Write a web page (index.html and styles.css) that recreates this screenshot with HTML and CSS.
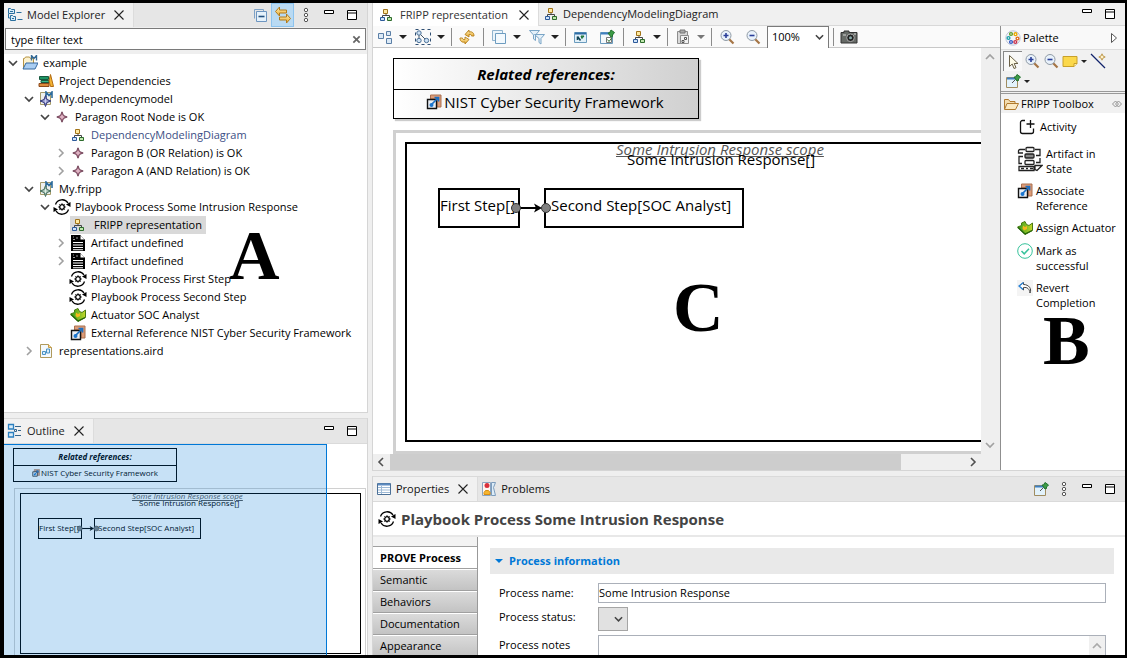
FILE: index.html
```html
<!DOCTYPE html>
<html lang="en">
<head>
<meta charset="utf-8">
<title>Model Explorer - FRIPP representation</title>
<link rel="stylesheet" href="styles.css">
</head>
<body>
<svg class="sprite" aria-hidden="true">
  <defs>
    <linearGradient id="gold" x1="0" y1="0" x2="0" y2="1"><stop offset="0" stop-color="#fff0b8"/><stop offset="1" stop-color="#e8a92f"/></linearGradient>
    <linearGradient id="leaf" x1="0" y1="0" x2="1" y2="0"><stop offset="0" stop-color="#2f9a1c"/><stop offset="1" stop-color="#c3d82a"/></linearGradient>
  </defs>
  <symbol id="i-explorer" viewBox="0 0 16 16"><g fill="#d9ecf8" stroke="#2a6f9e"><path d="M1.500 1.500h2l1 1h3v4h-6zM3.500 8.500h2l1 1h2v4h-5z"/><path d="M3 4.500h3M5 11.500h2M1.500 7v4h2M9.500 5.500h5M10.500 12.500h5"/></g></symbol>
  <symbol id="i-outline" viewBox="0 0 16 16"><g fill="#d9ecf8" stroke="#2a7fc0" stroke-width="1.300"><path d="M1.500 1.500h5v4.500h-5zM1.500 9.500h5v4.500h-5z"/></g><path d="M8 3.500h6M11 7.500h3M8 12.500h6" stroke="#35658c"/><path d="M7.500 6.500h2v2h-2z" fill="none" stroke="#35658c"/></symbol>
  <symbol id="i-close" viewBox="0 0 12 12"><path d="M1.500 1.500l9 9M10.500 1.500l-9 9" stroke="#222" stroke-width="1.100"/></symbol>
  <symbol id="i-min" viewBox="0 0 12 12"><path d="M1.500 1.500h9v3h-9z" fill="#fff" stroke="#000"/></symbol>
  <symbol id="i-max" viewBox="0 0 12 12"><path d="M1.500 1.500h9v9h-9zM1.500 4h9" fill="#fff" stroke="#000"/></symbol>
  <symbol id="i-dots" viewBox="0 0 8 16"><g fill="#fff" stroke="#555"><circle cx="4" cy="3" r="1.700"/><circle cx="4" cy="8" r="1.700"/><circle cx="4" cy="13" r="1.700"/></g></symbol>
  <symbol id="i-collapse" viewBox="0 0 16 16"><path d="M2.500 11.500v-9h9v2" fill="none" stroke="#7da2c8"/><path d="M4.500 4.500h10v10h-10z" fill="#e6f2fb" stroke="#6d95c0"/><path d="M6.500 9.500h6" stroke="#24507f" stroke-width="1.600"/></symbol>
  <symbol id="i-link" viewBox="0 0 18 18"><g fill="url(#gold)" stroke="#b27b1b"><path d="M1.500 5.500l4-4.500v3h7v3h-7v3z"/><path d="M16.500 12.500l-4-4.500v3h-7v3h7v3z"/></g></symbol>
  <symbol id="i-clear" viewBox="0 0 10 10"><path d="M1.500 1.500l7 7M8.500 1.500l-7 7" stroke="#666" stroke-width="1.900"/></symbol>
  <symbol id="i-open" viewBox="0 0 10 10"><path d="M1 3l4 4 4-4" fill="none" stroke="#444" stroke-width="1.700"/></symbol>
  <symbol id="i-shut" viewBox="0 0 10 10"><path d="M3 1l4 4-4 4" fill="none" stroke="#a0a0a0" stroke-width="1.600"/></symbol>
  <symbol id="i-project" viewBox="0 0 16 16"><path d="M1.500 13.500v-10h1l1-1.500h4l1 1.500h3v10z" fill="#fbf1cf" stroke="#b69343"/><path d="M1 14L4 8h12l-3 6z" fill="#a9cdf2" stroke="#34699f"/><path d="M9.500 5.500v-5l2.500 3 2.500-3v5" fill="none" stroke="#346a96" stroke-width="1.400"/></symbol>
  <symbol id="i-books" viewBox="0 0 16 16"><path d="M1.500 3.500h9v3h-9z" fill="#1d9463" stroke="#17583f"/><path d="M3 7.500h8v2h-8z" fill="#38b888" stroke="#17583f"/><path d="M1 10.500h10v3h-10z" fill="#dc8a3c" stroke="#8c4a1b"/><path d="M11 8l1.500-6.500 3 12h-3z" fill="#f3b332" stroke="#b26b12"/></symbol>
  <symbol id="i-model" viewBox="0 0 16 16"><path d="M2.500 1.500h10v12h-10z" fill="#eef0ee" stroke="#a59b6a"/><path d="M8 6V1l3 3.500L14 1v6" fill="none" stroke="#2d6c9c" stroke-width="1.600"/><path d="M7.500 4.500l1.500 4 4 1.500-4 1.500-1.500 4-1.500-4-4-1.500 4-1.500z" fill="#7d82bd" stroke="#343a7a"/><path d="M7.500 8v4M5.500 10h4" stroke="#cdd0f3"/></symbol>
  <symbol id="i-model2" viewBox="0 0 16 16"><path d="M2.500 1.500h10v12h-10z" fill="#eef0ee" stroke="#a59b6a"/><path d="M8 6V1l3 3.500L14 1v6" fill="none" stroke="#2d6c9c" stroke-width="1.600"/><path d="M7.500 4.500l1.500 4 4 1.500-4 1.500-1.500 4-1.500-4-4-1.500 4-1.500z" fill="#93b0a2" stroke="#47705f"/><path d="M7.500 8v4M5.500 10h4" stroke="#dff0e6"/></symbol>
  <symbol id="i-node" viewBox="0 0 16 16"><path d="M8 2.800l1.500 3.700L13.200 8 9.500 9.500 8 13.200 6.500 9.500 2.800 8l3.700-1.500z" fill="#b5788f" stroke="#704257"/><path d="M8 6v4M6 8h4" stroke="#ebc9d6"/></symbol>
  <symbol id="i-diagram" viewBox="0 0 16 16"><path d="M8 6v3M4.500 11V8.500h7V11" fill="none" stroke="#444"/><path d="M5.500 2.500h4v4h-4z" fill="#ffe9a0" stroke="#a2741a"/><path d="M2.500 10.500h4v3h-4z" fill="#cfe3fa" stroke="#2d5a9a"/><path d="M9.500 10.500h4v3h-4z" fill="#bfe6ad" stroke="#2d6b2c"/></symbol>
  <symbol id="i-process" viewBox="0 0 18 16"><g fill="none" stroke="#000" stroke-width="1.300"><path d="M2.500 5.500A7 7 0 0 1 15 4M15.500 10.500A7 7 0 0 1 3 12"/><circle cx="9" cy="8" r="2.300" stroke-width="1.300"/></g><path d="M9 4.300v1.200M9 10.500v1.200M5.300 8h1.200M11.500 8h1.200M6.400 5.400l.9.900M10.700 9.700l.9.900M11.600 5.400l-.9.900M6.400 10.600l.9-.9" stroke="#000"/><path d="M17.500 3v5l-4.500-2.500zM.5 13V8L5 10.500z"/></symbol>
  <symbol id="i-artifact" viewBox="0 0 16 18"><path d="M1 1h9l5 5v11H1z"/><path d="M10 1v5h5" fill="#fff" stroke="#000"/><path d="M3 8.500h10M3 11h10M3 13.500h10M3 15.700h10" stroke="#fff" stroke-width="1.100"/><path d="M3 3h1M6 4h2M3 5.500h2" stroke="#999"/></symbol>
  <symbol id="i-actuator" viewBox="0 0 16 16"><path d="M.5 7l4-1.500V3l3.500-1.500 1.500 3 2.500 1L15.500 3v7.500L8 14.500z" fill="url(#leaf)" stroke="#4b7a12"/><path d="M6 5.500l2 1.500 2-1v3l-3 1.500-1.500-2z" fill="#f7b81f"/><path d="M1 7.500l7 6.500 7-3.500" fill="none" stroke="#24640c" stroke-width="1.300"/></symbol>
  <symbol id="i-extref" viewBox="0 0 16 16"><path d="M4.500 1h10.500v12h-4V5H4.500z" fill="#dd9c78" stroke="#a97050"/><path d="M1.500 5.500h9v9h-9z" fill="#e9eef4" stroke="#111" stroke-width="1.400"/><path d="M5 11l7-7M8.500 3.500H12.500v4" fill="none" stroke="#1b6fc2" stroke-width="1.700"/><circle cx="5.500" cy="11" r="2" fill="#1b76cf"/></symbol>
  <symbol id="i-aird" viewBox="0 0 16 16"><path d="M2.500 1.500h8l3 3v10h-11z" fill="#f4f9fd" stroke="#b09a5c"/><path d="M10.500 1.500v3h3" fill="#f7dc9b" stroke="#c79b46"/><path d="M4.500 8.500h3v3h-3zM8.500 6h3v4h-3z" fill="#d9ecfa" stroke="#4b93c4"/></symbol>
  <symbol id="i-arrange" viewBox="0 0 16 16"><g fill="#dceaf7" stroke="#5b7fa6"><path d="M1.500 4.500h5v5h-5zM9.500 2.500h4v4h-4zM9.500 9.500h5v5h-5z"/></g></symbol>
  <symbol id="i-select" viewBox="0 0 18 18"><path d="M1.500 1.500h15v15h-15z" fill="none" stroke="#2f4f73" stroke-dasharray="3 3"/><path d="M5 5l8 8M5 5v8" stroke="#456"/><g fill="#cfe2f4" stroke="#4d7298"><circle cx="5" cy="5" r="2.200"/><circle cx="5" cy="12.500" r="2.200"/><circle cx="12.500" cy="12.500" r="2.200"/></g></symbol>
  <symbol id="i-refresh" viewBox="0 0 16 16"><g fill="url(#gold)" stroke="#b57e16" stroke-width=".9"><path d="M6 5.500L10 1v2c3-.8 5 .8 5 4h-2.500c0-1.400-1-1.900-2.500-1.500V8z"/><path d="M10 10.500L6 15v-2c-3 .8-5-.8-5-4h2.500c0 1.400 1 1.900 2.500 1.500V8z"/></g></symbol>
  <symbol id="i-layers" viewBox="0 0 16 16"><path d="M1.500 1.500h10v10h-10z" fill="#eaf4fb" stroke="#8fb3ce"/><path d="M4.500 4.500h10v10h-10z" fill="#f3f9fd" stroke="#6d9cc0"/></symbol>
  <symbol id="i-filter" viewBox="0 0 16 16"><g fill="#e4f0f9" stroke="#7aa5c6"><path d="M.5 1.500h10L6.500 6v5.500L4.500 10V6z"/><path d="M5.500 5.500h10L12 9.500V15l-2-1.500v-4z"/></g></symbol>
  <symbol id="i-pinview" viewBox="0 0 16 16"><path d="M1.500 3.500h12v10h-12z" fill="#e2f0f9" stroke="#6a9bbd"/><path d="M2 4.500h11" stroke="#2e6ca5" stroke-width="2"/><path d="M4.500 7.500l3 4M4.500 7.500v3.500" stroke="#145" stroke-width="1.600"/><path d="M8 7l3 0-2 2.500z" fill="#329a50" stroke="#1d6f35"/></symbol>
  <symbol id="i-pin" viewBox="0 0 16 16"><path d="M1.500 4.500h11v10h-11z" fill="#e2f2fb" stroke="#a08c60"/><path d="M2 5.500h10" stroke="#3e7fc0" stroke-width="2"/><path d="M7 10l3.500-3.500" stroke="#555"/><path d="M9 4h1.500L12 1.500 15.500 4 13.500 6v1.500L12 8z" fill="#3c9c46" stroke="#22702e"/></symbol>
  <symbol id="i-pincheck" viewBox="0 0 16 16"><path d="M1.500 3.500h12v11h-12z" fill="#f4f9fc" stroke="#6a9bbd"/><path d="M2 4.500h9" stroke="#3e7fc0" stroke-width="2"/><path d="M7.500 8.500h5v5h-5z" fill="#fff" stroke="#777"/><path d="M8.500 10.500l1.500 2 3-4" fill="none" stroke="#3a7a3a"/><path d="M9 4h1.500L12 1 15.500 3.500 13.500 6v1.500L12 8z" fill="#3c9c46" stroke="#22702e"/></symbol>
  <symbol id="i-paste" viewBox="0 0 16 16"><path d="M2.500 2.500h10v12h-10z" fill="#d9d9d9" stroke="#8d8d8d"/><path d="M5 1h5v3H5z" fill="#aaa" stroke="#777"/><path d="M5.500 6.500h8v8h-8z" fill="#f2f2f2" stroke="#8d8d8d"/><path d="M7 11.500h2v2H7zM9.500 8.500h2v2h-2z" fill="#fff" stroke="#555"/></symbol>
  <symbol id="i-zoomin" viewBox="0 0 16 16"><path d="M10 10l4.500 4.500" stroke="#a57546" stroke-width="2.200"/><circle cx="7" cy="6.500" r="5" fill="#e9f2fb" stroke="#8f9aa5"/><path d="M4.500 6.500h5M7 4v5" stroke="#2a3f99" stroke-width="1.600"/></symbol>
  <symbol id="i-zoomout" viewBox="0 0 16 16"><path d="M10 10l4.500 4.500" stroke="#a57546" stroke-width="2.200"/><circle cx="7" cy="6.500" r="5" fill="#e9f2fb" stroke="#8f9aa5"/><path d="M4.500 6.500h5" stroke="#2a3f99" stroke-width="1.600"/></symbol>
  <symbol id="i-camera" viewBox="0 0 18 16"><path d="M1 3.500h3V2h5v1.500h8V14H1z" fill="#666a66" stroke="#333"/><circle cx="10.500" cy="8.800" r="3.800" fill="#222" stroke="#aaa"/><circle cx="10.500" cy="8.800" r="1.500" fill="#8aa"/><path d="M3 6h3M14 5h2" stroke="#d4d4d4"/></symbol>
  <symbol id="i-palette" viewBox="0 0 16 16"><circle cx="8" cy="8" r="7.200" fill="#f2f4fb" stroke="#c0c6d8"/><g fill="#fff" stroke-width="1.400"><circle cx="6" cy="4" r="1.400" stroke="#5b9b28"/><circle cx="10.500" cy="4.200" r="1.400" stroke="#e8a800"/><circle cx="3.500" cy="8" r="1.400" stroke="#1aa0a8"/><circle cx="12.500" cy="8.500" r="1.400" stroke="#e26a1c"/><circle cx="6" cy="12" r="1.400" stroke="#3159c4"/><circle cx="10.300" cy="12" r="1.400" stroke="#c72f4a"/></g></symbol>
  <symbol id="i-cursor" viewBox="0 0 16 16"><path d="M4.500 1.500v11l2.700-2.500 1.800 4.500 2-.8-1.800-4.200h3.800z" fill="#fffce8" stroke="#6b6148"/></symbol>
  <symbol id="i-note" viewBox="0 0 16 16"><path d="M1 3.500h14v7L12 13.500H1z" fill="#fbd84b" stroke="#c8a02a"/><path d="M15 10.500h-3v3" fill="#fff3b5" stroke="#c8a02a"/></symbol>
  <symbol id="i-line" viewBox="0 0 16 16"><path d="M1 1l14 14" stroke="#10226b" stroke-width="1.300"/><path d="M12 .8l1 2.200 2.200 1-2.200 1-1 2.200-1-2.200-2.200-1 2.200-1z" fill="#fff3cd" stroke="#b38831" stroke-width=".8"/></symbol>
  <symbol id="i-folder" viewBox="0 0 16 16"><path d="M1.500 13V3.500h4l1.500 2h5V7" fill="#f4ddb0" stroke="#b07a2f"/><path d="M1.500 13.500L4 7.500h11.500l-3 6z" fill="#fbe9c3" stroke="#b07a2f"/></symbol>
  <symbol id="i-drawerpin" viewBox="0 0 12 10"><path d="M4.500 2L1.500 5l3 3M7.500 2l3 3-3 3M4.500 2l3 3-3 3M7.500 2l-3 3 3 3" fill="none" stroke="#888" stroke-width=".9"/></symbol>
  <symbol id="i-activity" viewBox="0 0 16 16"><path d="M6 1.500H3.500a2 2 0 0 0-2 2v9a2 2 0 0 0 2 2h9a2 2 0 0 0 2-2V9.500" fill="none" stroke="#111" stroke-width="1.300"/><path d="M7.500 5h8M11.500 1v8" stroke="#111" stroke-width="1.300"/></symbol>
  <symbol id="i-state" viewBox="0 0 26 26"><g fill="#fff" stroke="#222" stroke-width="1.300"><rect x="9" y="1.500" width="8" height="4" rx="1"/><rect x="8" y="8" width="9" height="4" rx="1" fill="#888"/><rect x="8" y="14.500" width="9" height="4" rx="1"/><path d="M8 3.500H3a1.500 1.500 0 0 0-1.500 1.500v2H6M18 3.500h5v6h-4M6 10.500H2v7h3M19 16.500h4V12"/><path d="M2 20.500h15v4H2zM18 23.500v-4h7l-5 5z"/></g><path d="M4 22.500h3M9 22.500h2M13 22.500h3" stroke="#222" stroke-width="1.600"/></symbol>
  <symbol id="i-check" viewBox="0 0 16 16"><circle cx="8" cy="8" r="7.300" fill="#fff" stroke="#36c29b"/><path d="M4.500 8l2.700 2.800 4.800-5" fill="none" stroke="#36c29b" stroke-width="1.500"/></symbol>
  <symbol id="i-undo" viewBox="0 0 16 16"><path d="M0 0h16v16H0z" fill="#f4f4f4"/><path d="M6.500 2.500L2 6l4.500 4V7.500c4-.5 6 1.500 6.500 5.500 2-4-1-8.500-6.500-8.500z" fill="#fff" stroke="#444"/><path d="M6.500 2.500L2 6l4 3.500" fill="none" stroke="#2e86d9" stroke-width="1.300"/></symbol>
  <symbol id="i-table" viewBox="0 0 16 16"><path d="M1.500 2.500h13v11h-13z" fill="#fff" stroke="#4b7097"/><path d="M2 3.500h12" stroke="#5d8bc0" stroke-width="2"/><path d="M2 6.500h12M2 9h12M2 11.500h12M5.500 5v8" stroke="#9db9d6"/></symbol>
  <symbol id="i-problems" viewBox="0 0 16 16"><path d="M1.500 1.500h8v13h-8z" fill="#fff5ee" stroke="#8aa4c0"/><path d="M10.500 1.500h4l-2 5 2 8h-4z" fill="#dcecf8" stroke="#7c9cbc"/><circle cx="6" cy="4.500" r="2.500" fill="#d9303b"/><path d="M3 13.500v-2l1.500-2h3l1.500 2v2z" fill="#f6b52e" stroke="#d98e12"/></symbol>
</svg>

<main class="workbench">
  <section class="side">
    <section class="panel explorer">
      <header class="tabbar">
        <div class="tab"><svg class="ic"><use href="#i-explorer"/></svg><span>Model Explorer</span><button class="x" aria-label="Close Model Explorer"><svg><use href="#i-close"/></svg></button></div>
        <div class="tools">
          <button aria-label="Collapse all"><svg class="ic"><use href="#i-collapse"/></svg></button>
          <button class="on" aria-label="Link with editor"><svg class="ic"><use href="#i-link"/></svg></button>
          <button aria-label="View menu"><svg class="dots"><use href="#i-dots"/></svg></button>
          <button aria-label="Minimize"><svg class="win"><use href="#i-min"/></svg></button>
          <button aria-label="Maximize"><svg class="win"><use href="#i-max"/></svg></button>
        </div>
      </header>
      <div class="filter"><input type="text" value="type filter text" aria-label="Filter"><button aria-label="Clear"><svg><use href="#i-clear"/></svg></button></div>
      <ul class="tree">
        <li class="l0"><svg class="tw"><use href="#i-open"/></svg><span class="item"><svg class="ic"><use href="#i-project"/></svg>example</span></li>
        <li class="l1"><i class="tw"></i><span class="item"><svg class="ic"><use href="#i-books"/></svg>Project Dependencies</span></li>
        <li class="l1"><svg class="tw"><use href="#i-open"/></svg><span class="item"><svg class="ic"><use href="#i-model"/></svg>My.dependencymodel</span></li>
        <li class="l2"><svg class="tw"><use href="#i-open"/></svg><span class="item"><svg class="ic"><use href="#i-node"/></svg>Paragon Root Node is OK</span></li>
        <li class="l3"><i class="tw"></i><span class="item blue"><svg class="ic"><use href="#i-diagram"/></svg>DependencyModelingDiagram</span></li>
        <li class="l3"><svg class="tw"><use href="#i-shut"/></svg><span class="item"><svg class="ic"><use href="#i-node"/></svg>Paragon B (OR Relation) is OK</span></li>
        <li class="l3"><svg class="tw"><use href="#i-shut"/></svg><span class="item"><svg class="ic"><use href="#i-node"/></svg>Paragon A (AND Relation) is OK</span></li>
        <li class="l1"><svg class="tw"><use href="#i-open"/></svg><span class="item"><svg class="ic"><use href="#i-model2"/></svg>My.fripp</span></li>
        <li class="l2"><svg class="tw"><use href="#i-open"/></svg><span class="item"><svg class="ic wide"><use href="#i-process"/></svg>Playbook Process Some Intrusion Response</span></li>
        <li class="l3"><i class="tw"></i><span class="item selected"><svg class="ic"><use href="#i-diagram"/></svg>FRIPP representation</span></li>
        <li class="l3"><svg class="tw"><use href="#i-shut"/></svg><span class="item"><svg class="ic tall"><use href="#i-artifact"/></svg>Artifact undefined</span></li>
        <li class="l3"><svg class="tw"><use href="#i-shut"/></svg><span class="item"><svg class="ic tall"><use href="#i-artifact"/></svg>Artifact undefined</span></li>
        <li class="l3"><i class="tw"></i><span class="item"><svg class="ic wide"><use href="#i-process"/></svg>Playbook Process First Step</span></li>
        <li class="l3"><i class="tw"></i><span class="item"><svg class="ic wide"><use href="#i-process"/></svg>Playbook Process Second Step</span></li>
        <li class="l3"><i class="tw"></i><span class="item"><svg class="ic"><use href="#i-actuator"/></svg>Actuator SOC Analyst</span></li>
        <li class="l3"><i class="tw"></i><span class="item"><svg class="ic"><use href="#i-extref"/></svg>External Reference NIST Cyber Security Framework</span></li>
        <li class="l1"><svg class="tw"><use href="#i-shut"/></svg><span class="item"><svg class="ic"><use href="#i-aird"/></svg>representations.aird</span></li>
      </ul>
      <strong class="mark mark-a">A</strong>
    </section>

    <section class="panel outline">
      <header class="tabbar">
        <div class="tab"><svg class="ic"><use href="#i-outline"/></svg><span>Outline</span><button class="x" aria-label="Close Outline"><svg><use href="#i-close"/></svg></button></div>
        <div class="tools">
          <button aria-label="Minimize"><svg class="win"><use href="#i-min"/></svg></button>
          <button aria-label="Maximize"><svg class="win"><use href="#i-max"/></svg></button>
        </div>
      </header>
      <div class="canvas mini">
        <div class="refs"><b>Related references:</b><span><svg><use href="#i-extref"/></svg>NIST Cyber Security Framework</span></div>
        <div class="scope"></div>
        <div class="process"></div>
        <em class="scope-name">Some Intrusion Response scope</em>
        <span class="process-name">Some Intrusion Response[]</span>
        <div class="step first">First Step[]</div>
        <div class="step second">Second Step[SOC Analyst]</div>
        <svg class="edge" viewBox="0 0 40 12"><path d="M8 6h20" stroke="#000" stroke-width="2"/><path d="M23 1.500L31 6l-8 4.500 2-4.500z"/><g fill="#808080" stroke="#333"><circle cx="5" cy="6" r="4.500"/><circle cx="35" cy="6" r="4.500"/></g></svg>
        <div class="viewport"></div>
      </div>
    </section>
  </section>

  <section class="content">
    <section class="panel editor">
      <header class="tabbar light">
        <div class="tab active"><svg class="ic"><use href="#i-diagram"/></svg><span>FRIPP representation</span><button class="x" aria-label="Close FRIPP representation"><svg><use href="#i-close"/></svg></button></div>
        <div class="tab rest"><svg class="ic"><use href="#i-diagram"/></svg><span>DependencyModelingDiagram</span></div>
        <div class="tools">
          <button aria-label="Minimize"><svg class="win"><use href="#i-min"/></svg></button>
          <button aria-label="Maximize"><svg class="win"><use href="#i-max"/></svg></button>
        </div>
      </header>
      <div class="editor-body">
        <div class="drawing">
          <div class="toolbar">
            <div class="pair"><button aria-label="Arrange"><svg class="ic"><use href="#i-arrange"/></svg></button><button class="drop" aria-label="Arrange options"></button></div>
            <div class="pair"><button aria-label="Select"><svg class="ic large"><use href="#i-select"/></svg></button><button class="drop" aria-label="Select options"></button></div>
            <i class="sep"></i>
            <button aria-label="Refresh"><svg class="ic"><use href="#i-refresh"/></svg></button>
            <i class="sep"></i>
            <div class="pair"><button aria-label="Layers"><svg class="ic"><use href="#i-layers"/></svg></button><button class="drop" aria-label="Layer options"></button></div>
            <div class="pair"><button aria-label="Filters"><svg class="ic"><use href="#i-filter"/></svg></button><button class="drop" aria-label="Filter options"></button></div>
            <i class="sep"></i>
            <button aria-label="Show elements"><svg class="ic"><use href="#i-pinview"/></svg></button>
            <button aria-label="Pin elements"><svg class="ic"><use href="#i-pincheck"/></svg></button>
            <i class="sep"></i>
            <div class="pair"><button aria-label="Mode"><svg class="ic"><use href="#i-diagram"/></svg></button><button class="drop" aria-label="Mode options"></button></div>
            <i class="sep"></i>
            <div class="pair"><button aria-label="Paste layout"><svg class="ic"><use href="#i-paste"/></svg></button><button class="drop dim" aria-label="Paste options"></button></div>
            <i class="sep"></i>
            <button aria-label="Zoom in"><svg class="ic"><use href="#i-zoomin"/></svg></button>
            <button aria-label="Zoom out"><svg class="ic"><use href="#i-zoomout"/></svg></button>
            <div class="zoom"><select aria-label="Zoom level"><option>100%</option></select><svg><use href="#i-open"/></svg></div>
            <i class="sep"></i>
            <button aria-label="Export as image"><svg class="ic wide"><use href="#i-camera"/></svg></button>
          </div>
          <div class="scroller">
            <div class="canvas main">
              <div class="refs"><b>Related references:</b><span><svg><use href="#i-extref"/></svg>NIST Cyber Security Framework</span></div>
              <div class="scope"></div>
              <div class="process"></div>
              <em class="scope-name">Some Intrusion Response scope</em>
              <span class="process-name">Some Intrusion Response[]</span>
              <div class="step first">First Step[]</div>
              <div class="step second">Second Step[SOC Analyst]</div>
              <svg class="edge" viewBox="0 0 40 12"><path d="M8 6h20" stroke="#000" stroke-width="2"/><path d="M23 1.500L31 6l-8 4.500 2-4.500z"/><g fill="#808080" stroke="#333"><circle cx="5" cy="6" r="4.500"/><circle cx="35" cy="6" r="4.500"/></g></svg>
              <strong class="mark mark-c">C</strong>
            </div>
            <div class="vbar"><svg class="up"><use href="#i-open"/></svg><svg><use href="#i-open"/></svg></div>
            <div class="hbar"><svg class="left"><use href="#i-shut"/></svg><span class="track"><i class="thumb"></i></span><svg><use href="#i-shut"/></svg></div>
          </div>
        </div>
        <aside class="palette">
          <h2><svg class="ic"><use href="#i-palette"/></svg><span>Palette</span><svg class="fly" viewBox="0 0 8 12"><path d="M1.500 1.500l5 4.500-5 4.500z" fill="#fff" stroke="#555"/></svg></h2>
          <div class="ptools">
            <button class="pressed" aria-label="Select"><svg class="ic"><use href="#i-cursor"/></svg></button>
            <button aria-label="Zoom in"><svg class="ic"><use href="#i-zoomin"/></svg></button>
            <button aria-label="Zoom out"><svg class="ic"><use href="#i-zoomout"/></svg></button>
            <button aria-label="Note"><svg class="ic"><use href="#i-note"/></svg></button>
            <button class="drop" aria-label="Note options"></button>
            <button aria-label="Note attachment"><svg class="ic"><use href="#i-line"/></svg></button>
            <button aria-label="Pin"><svg class="ic"><use href="#i-pin"/></svg></button>
            <button class="drop" aria-label="Pin options"></button>
          </div>
          <h3><svg class="ic"><use href="#i-folder"/></svg><span>FRIPP Toolbox</span><svg class="dp"><use href="#i-drawerpin"/></svg></h3>
          <div class="entries">
            <button class="activity"><svg class="ic"><use href="#i-activity"/></svg><span>Activity</span></button>
            <button><svg class="big"><use href="#i-state"/></svg><span>Artifact in<br>State</span></button>
            <button><svg class="ic"><use href="#i-extref"/></svg><span>Associate<br>Reference</span></button>
            <button><svg class="ic"><use href="#i-actuator"/></svg><span>Assign Actuator</span></button>
            <button><svg class="ic"><use href="#i-check"/></svg><span>Mark as<br>successful</span></button>
            <button><svg class="ic"><use href="#i-undo"/></svg><span>Revert<br>Completion</span></button>
          </div>
          <strong class="mark mark-b">B</strong>
        </aside>
      </div>
    </section>

    <section class="panel properties">
      <header class="tabbar">
        <div class="tab"><svg class="ic"><use href="#i-table"/></svg><span>Properties</span><button class="x" aria-label="Close Properties"><svg><use href="#i-close"/></svg></button></div>
        <div class="tab rest"><svg class="ic"><use href="#i-problems"/></svg><span>Problems</span></div>
        <div class="tools">
          <button aria-label="Pin"><svg class="ic"><use href="#i-pin"/></svg></button>
          <button aria-label="View menu"><svg class="dots"><use href="#i-dots"/></svg></button>
          <button aria-label="Minimize"><svg class="win"><use href="#i-min"/></svg></button>
          <button aria-label="Maximize"><svg class="win"><use href="#i-max"/></svg></button>
        </div>
      </header>
      <h1><svg class="ic wide"><use href="#i-process"/></svg><span>Playbook Process Some Intrusion Response</span></h1>
      <div class="sheet">
        <nav class="pages">
          <button class="current">PROVE Process</button>
          <button>Semantic</button>
          <button>Behaviors</button>
          <button>Documentation</button>
          <button>Appearance</button>
        </nav>
        <form class="form">
          <h2>Process information</h2>
          <div class="fields">
            <label for="pname">Process name:</label><input id="pname" type="text" value="Some Intrusion Response">
            <label for="pstatus">Process status:</label><div class="status"><select id="pstatus"><option></option></select><svg><use href="#i-open"/></svg></div>
            <label for="pnotes">Process notes</label><div class="notes"><textarea id="pnotes"></textarea><span><svg><use href="#i-open"/></svg></span></div>
          </div>
        </form>
      </div>
    </section>
  </section>
</main>
</body>
</html>
```

FILE: styles.css
```css
* { box-sizing: border-box; }
body { margin: 0; font: 11px/18px "Open Sans", "Noto Sans", sans-serif; color: #000; background: #000; }
h1, h2, h3, ul { margin: 0; padding: 0; font-size: inherit; }
button { margin: 0; padding: 0; border: 0; background: none; font: inherit; color: inherit; }
input, select, textarea { margin: 0; font: inherit; color: inherit; border-radius: 0; outline: 0; }
svg { display: block; flex: none; }
.sprite { position: absolute; width: 0; height: 0; }
.ic { width: 16px; height: 16px; }
.ic.wide { width: 18px; margin: 0 -1px; }
.ic.tall { height: 18px; }
.ic.large { width: 18px; height: 18px; }

.workbench { height: 100vh; border: solid #000; border-width: 3px 2px 3px 4px; display: grid; grid-template-columns: minmax(0, 364fr) minmax(0, 753fr); gap: 4px; background: #efefef; overflow: hidden; }
.side, .content { display: grid; min-height: 0; min-width: 0; gap: 5px; }
.side { grid-template-rows: minmax(0, 410fr) minmax(0, 237fr); }
.content { grid-template-rows: minmax(0, 468fr) minmax(0, 179fr); }
.panel { position: relative; display: flex; flex-direction: column; min-height: 0; min-width: 0; overflow: hidden; }
.side .panel { border-right: 1px solid #d5d5d5; }
.explorer { border-bottom: 1px solid #d5d5d5; }

.tabbar { display: flex; flex: none; height: 26px; background: #e6e6e6; }
.tab { display: flex; align-items: center; gap: 4px; padding: 0 8px 0 3px; background: #f1f1f1; border-right: 1px solid #dcdcdc; color: #222; white-space: nowrap; }
.tab.rest { background: none; border: 0; }
.outline .tabbar, .properties .tabbar { border: solid #dadada; border-width: 1px 0; }
.explorer .tabbar { height: 24px; }
.x { width: 12px; height: 12px; margin-left: 4px; }
.x svg, .win { width: 12px; height: 12px; }
.tools { margin-left: auto; display: flex; align-items: center; padding-right: 4px; }
.tools button { width: 23px; height: 100%; display: flex; align-items: center; justify-content: center; }
.tools .on { background: #b9daf3; border: 1px solid #8cc3ee; }
.tools .on .ic { width: 18px; height: 18px; }
.dots { width: 8px; height: 16px; }
.light.tabbar { background: #f0f0f0; height: 23px; border-bottom: 1px solid #d8d8d8; }
.light .active { background: #fff; height: 23px; color: #333; padding: 0 8px 0 5px; gap: 6px; }
.light .rest { padding-left: 4px; }

.filter { flex: none; height: 22px; margin: 1px 1px 4px; display: flex; align-items: center; border: 1px solid #7a7a7a; background: #fff; }
.filter input { flex: 1; min-width: 0; height: 20px; border: 0; padding: 0 5px; background: none; }
.filter button { width: 18px; height: 18px; }
.filter svg { width: 9px; height: 9px; margin: auto; }
.tree { flex: 1; min-height: 0; overflow: hidden; background: #fff; list-style: none; white-space: nowrap; }
.tree li { height: 18px; display: flex; align-items: center; }
.l1 { padding-left: 16px; }
.l2 { padding-left: 32px; }
.l3 { padding-left: 48px; }
.tree .tw { flex: none; width: 10px; height: 10px; margin: 0 4px; }
.item { display: flex; align-items: center; gap: 5px; height: 18px; }
.item.blue { color: #3c4f85; }
.item.selected { background: #d9d9d9; gap: 8px; padding: 0 4px 0 0; }

.mark { position: absolute; z-index: 2; font: bold 70px/50px "Liberation Serif", serif; }
.mark-a { left: 225px; top: 228px; }
.mark-b { left: 42px; top: 290px; }
.mark-c { left: 300px; top: 235px; }

.canvas { position: relative; flex: 1; min-height: 0; background: #fff; overflow: hidden; white-space: nowrap; }
.canvas > * { position: absolute; }
.refs { border: 1px solid #000; background: linear-gradient(90deg, #fff, #d0d0d0); display: grid; grid-template-rows: 1fr 1fr; text-align: center; }
.refs b { font-style: italic; border-bottom: 1px solid #000; }
.refs span { display: flex; justify-content: center; align-items: center; gap: 2px; }
.scope { border: solid #d0d0d0; }
.process { border: solid #000; }
.scope-name { color: #555; text-decoration: underline; }
.step { border: 2px solid #000; }

.main { font-size: 15px; line-height: 20px; }
.main .refs { left: 20px; top: 10px; width: 306px; height: 61px; line-height: 30px; box-shadow: 2px 2px 1px #ccc; }
.main .refs span { line-height: 20px; padding: 0 2px 4px 0; }
.main .refs svg { width: 16px; height: 16px; }
.main .scope { left: 20px; top: 82px; right: 0; height: 324px; border-width: 3px 0 3px 3px; }
.main .process { left: 32px; top: 94px; right: 0; height: 300px; border-width: 2px 0 2px 2px; }
.main .scope-name { left: 243px; top: 91px; }
.main .process-name { left: 254px; top: 101px; }
.main .step { height: 40px; line-height: 30px; top: 140px; }
.main .first { left: 65px; width: 82px; }
.main .second { left: 171px; width: 200px; padding-left: 5px; }
.main .edge { left: 138px; top: 154px; width: 40px; height: 12px; }

.mini { font-size: 8px; line-height: 10px; }
.mini .refs { left: 9px; top: 4px; width: 164px; height: 34px; line-height: 16px; background: #fff; }
.mini .refs span { gap: 1px; line-height: 10px; padding-bottom: 2px; }
.mini .refs svg { width: 8px; height: 8px; }
.mini .scope { left: 10px; top: 44px; right: 1px; height: 180px; border-width: 1px; }
.mini .process { left: 16px; top: 49px; right: 6px; height: 161px; border-width: 1px; }
.mini .scope-name { left: 128px; top: 47px; }
.mini .process-name { left: 135px; top: 54px; }
.mini .step { border-width: 1px; top: 74px; height: 21px; line-height: 17px; }
.mini .first { left: 34px; width: 44px; }
.mini .second { left: 90px; width: 107px; padding-left: 3px; }
.mini .edge { left: 73px; top: 81px; width: 22px; height: 7px; }
.viewport { left: 0; top: 0; bottom: 0; width: 89%; background: rgba(0, 120, 215, .22); border: solid #0078d7; border-width: 1px 1px 0 0; }

.editor { border: solid #d5d5d5; border-width: 0 0 1px 1px; }
.editor-body { flex: 1; min-height: 0; display: grid; grid-template-columns: minmax(0, 1fr) 125px; }
.drawing { display: flex; flex-direction: column; min-width: 0; min-height: 0; }
.toolbar { flex: none; height: 22px; display: flex; align-items: center; gap: 2px; background: #fafafa; border-bottom: 1px solid #c8c8c8; }
.toolbar button { width: 24px; height: 20px; display: flex; align-items: center; justify-content: center; }
.pair { display: flex; }
.toolbar .drop, .ptools .drop { width: 12px; display: flex; align-items: center; justify-content: center; }
.drop::before { content: ""; border: solid transparent; border-width: 4px 4px 0; border-top-color: #222; }
.drop.dim::before { border-top-color: #777; }
.sep { width: 4px; height: 18px; background: linear-gradient(#8c8c8c, #8c8c8c) center / 1px 100% no-repeat; }
.zoom { position: relative; width: 62px; height: 22px; }
.zoom select { width: 100%; height: 100%; appearance: none; border: 1px solid #7a7a7a; border-bottom: 0; background: #fff; padding: 0 4px; }
.zoom svg { position: absolute; right: 5px; top: 6px; width: 9px; height: 10px; }
.scroller { flex: 1; min-height: 0; display: grid; grid-template: minmax(0, 1fr) 16px / minmax(0, 1fr) 19px; background: #efefef; }
.vbar { display: flex; flex-direction: column; justify-content: space-between; align-items: center; padding: 4px 2px 4px 0; opacity: .45; }
.vbar svg, .hbar svg { width: 10px; height: 10px; }
.up { transform: rotate(180deg); }
.hbar { display: flex; align-items: center; padding: 0 3px; gap: 4px; color: #555; }
.hbar svg { filter: brightness(.5); }
.left { transform: rotate(180deg); }
.track { flex: 1; height: 100%; }
.thumb { display: block; width: 89%; height: 100%; background: #cdcdcd; }

.palette { position: relative; display: flex; flex-direction: column; min-height: 0; border-left: 1px solid #8f8f8f; background: #fff; overflow: hidden; }
.palette h2 { flex: none; height: 24px; display: flex; align-items: center; gap: 2px; padding: 0 7px 0 4px; background: #f9f9f9; font-weight: normal; border-bottom: 1px solid #ddd; }
.palette h2 span, .palette h3 span { flex: 1; white-space: nowrap; }
.fly { width: 8px; height: 12px; }
.ptools { flex: none; display: flex; flex-wrap: wrap; background: #f1f1f1; padding: 1px 2px 0; border-bottom: 3px double #999; }
.ptools button { width: 19px; height: 20px; display: flex; align-items: center; justify-content: center; }
.ptools .pressed { border: solid #888; border-width: 1px 0 0 1px; background: #f8f8f8; }
.ptools .drop { width: 9px; }
.ptools .drop::before { border-width: 3px 3px 0; }
.palette h3 { flex: none; height: 19px; display: flex; align-items: center; gap: 2px; padding: 0 2px; background: #f1f1f1; font-weight: normal; }
.dp { width: 12px; height: 10px; }
.entries { display: flex; flex-direction: column; gap: 7px; padding: 6px 2px 0 16px; line-height: 15px; }
.entries button { display: flex; align-items: flex-start; gap: 3px; text-align: left; white-space: nowrap; }
.entries .activity { gap: 5px; padding: 0 0 4px 2px; }
.entries .big { width: 26px; height: 26px; }

.properties { border-left: 1px solid #d5d5d5; background: #fff; }
.properties .tab { color: #111; }
.properties h1 { flex: none; height: 35px; display: flex; align-items: center; gap: 6px; padding: 0 6px; font-size: 15px; color: #444; border-bottom: 2px solid #e8e8e8; white-space: nowrap; }
.sheet { flex: 1; min-height: 0; display: grid; grid-template-columns: 105px minmax(0, 1fr); }
.pages { display: flex; flex-direction: column; padding-top: 9px; background: #f3f3f3; border-right: 1px solid #999; overflow: hidden; }
.pages button { flex: none; height: 22px; padding: 0 7px; text-align: left; border-top: 1px solid #a0a0a0; box-shadow: inset 0 1px #fff; background: linear-gradient(#dcdcdc, #c3c3c3); white-space: nowrap; }
.pages .current { background: #fff; font-weight: bold; }
.form { padding: 11px 11px 0 12px; overflow: hidden; }
.form h2 { height: 26px; padding: 0 5px; display: flex; align-items: center; gap: 6px; background: #e9e9e9; color: #0078d7; line-height: 24px; }
.form h2::before { content: ""; border: solid transparent; border-width: 4px 4px 0; border-top-color: #0078d7; }
.fields { display: grid; grid-template-columns: 99px minmax(0, 1fr); grid-template-rows: 20px 24px 40px; row-gap: 4px; padding: 9px 8px 0 9px; }
.fields label { line-height: 20px; }
.fields input { border: 1px solid #abb0b9; padding: 0; width: 100%; }
.status { position: relative; width: 30px; height: 24px; }
.status select { width: 100%; height: 100%; appearance: none; border: 1px solid #a5a5a5; background: #e1e1e1; }
.status svg { position: absolute; right: 5px; top: 7px; width: 9px; height: 10px; }
.notes { display: flex; border: 1px solid #abb0b9; }
.notes textarea { flex: 1; min-width: 0; resize: none; border: 0; padding: 0; }
.notes span { width: 16px; background: #f0f0f0; padding: 5px 3px; }
.notes svg { width: 10px; height: 10px; transform: rotate(180deg); opacity: .4; }
```
